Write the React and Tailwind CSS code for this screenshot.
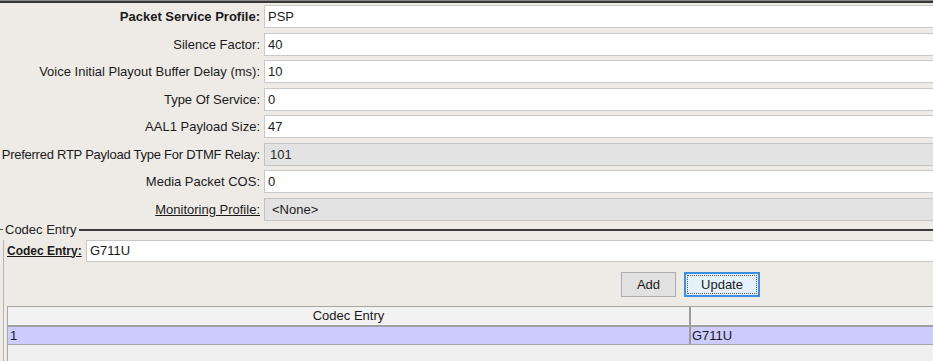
import React from "react";

const rows = [
  { label: "Packet Service Profile:", value: "PSP", bold: true },
  { label: "Silence Factor:", value: "40" },
  { label: "Voice Initial Playout Buffer Delay (ms):", value: "10" },
  { label: "Type Of Service:", value: "0" },
  { label: "AAL1 Payload Size:", value: "47" },
  { label: "Preferred RTP Payload Type For DTMF Relay:", value: "101", disabled: true, tight: true },
  { label: "Media Packet COS:", value: "0" },
  { label: "Monitoring Profile:", value: "<None>", combo: true },
];

function Row({ label, value, bold, disabled, combo, tight }) {
  return (
    <div className="flex items-center h-[23px]">
      <div className="w-[260px] shrink-0 flex justify-end whitespace-nowrap">
        <span
          className={
            (bold ? "font-bold " : "") +
            (combo ? "underline " : "") +
            (tight ? "tracking-[-0.25px]" : "")
          }
        >
          {label}
        </span>
      </div>
      <div
        className={
          "ml-[4px] -mr-[12px] flex-1 h-full flex items-center border " +
          (disabled
            ? "bg-[#e3e3e3] border-[#c3c3c3] text-[#2a2a2a] pl-[5px]"
            : combo
            ? "bg-[#e3e3e3] border-[#c3c3c3] pl-[7px]"
            : "bg-white border-[#c8c8c8] pl-[3px]")
        }
      >
        {value}
      </div>
    </div>
  );
}

export default function App() {
  return (
    <div className="w-[933px] h-[361px] overflow-hidden bg-[#eeebe7] text-[13px] leading-none text-[#1a1a1a] font-['Liberation_Sans',Arial,sans-serif]">
      <div className="h-[1px] bg-[#8a8a8a]" />
      <div className="h-[2px] bg-[#363636]" />
      <div className="flex flex-col gap-[4.5px] pt-[2px]">
        {rows.map((r) => (
          <Row key={r.label} {...r} />
        ))}
      </div>

      <div className="mt-[2px] flex items-center h-[14px]">
        <div className="w-[3px] h-px bg-[#555]" />
        <span className="px-[2px] text-[#222]">Codec Entry</span>
        <div className="flex-1 h-[2px] bg-[#3a3a3a]" />
      </div>

      <div className="ml-[3px] border-l border-[#b4b4b4] pl-[3px] h-[140px]">
        <div className="flex items-center h-[22px] mt-[3px]">
          <span className="font-bold underline whitespace-nowrap text-[12px] w-[75px]">Codec Entry:</span>
          <div className="ml-[4px] -mr-[12px] flex-1 h-full flex items-center bg-white border border-[#c8c8c8] pl-[3px]">
            G711U
          </div>
        </div>

        <div className="flex justify-end pr-[173px] gap-[8px] mt-[10px] h-[25px]">
          <button className="w-[55px] h-full bg-[#e1e1e1] border border-[#adadad] text-[#1a1a1a]">
            Add
          </button>
          <button className="w-[76px] h-full bg-[#e5f1fb] border-[2px] border-[#3d8ee0] p-[1px]">
            <div className="w-full h-full border border-dotted border-[#555] flex items-center justify-center">
              Update
            </div>
          </button>
        </div>

        <div className="mt-[9px] -mr-[12px] border-l border-t border-[#a6a6a6] bg-[#f0f0f0] h-[60px]">
          <div className="flex h-[20px] bg-[#f2f2f2] border-b-[2px] border-[#a0a0a0]">
            <div className="w-[683px] border-r-[2px] border-[#9a9a9a] flex items-center justify-center">
              Codec Entry
            </div>
            <div className="flex-1" />
          </div>
          <div className="flex h-[18px] bg-[#ccccff] border-b border-[#a6a6a6]">
            <div className="w-[683px] border-r-[2px] border-[#9a9a9a] flex items-center pl-[2px]">1</div>
            <div className="flex-1 flex items-center pl-[1px]">G711U</div>
          </div>
        </div>
      </div>
    </div>
  );
}
